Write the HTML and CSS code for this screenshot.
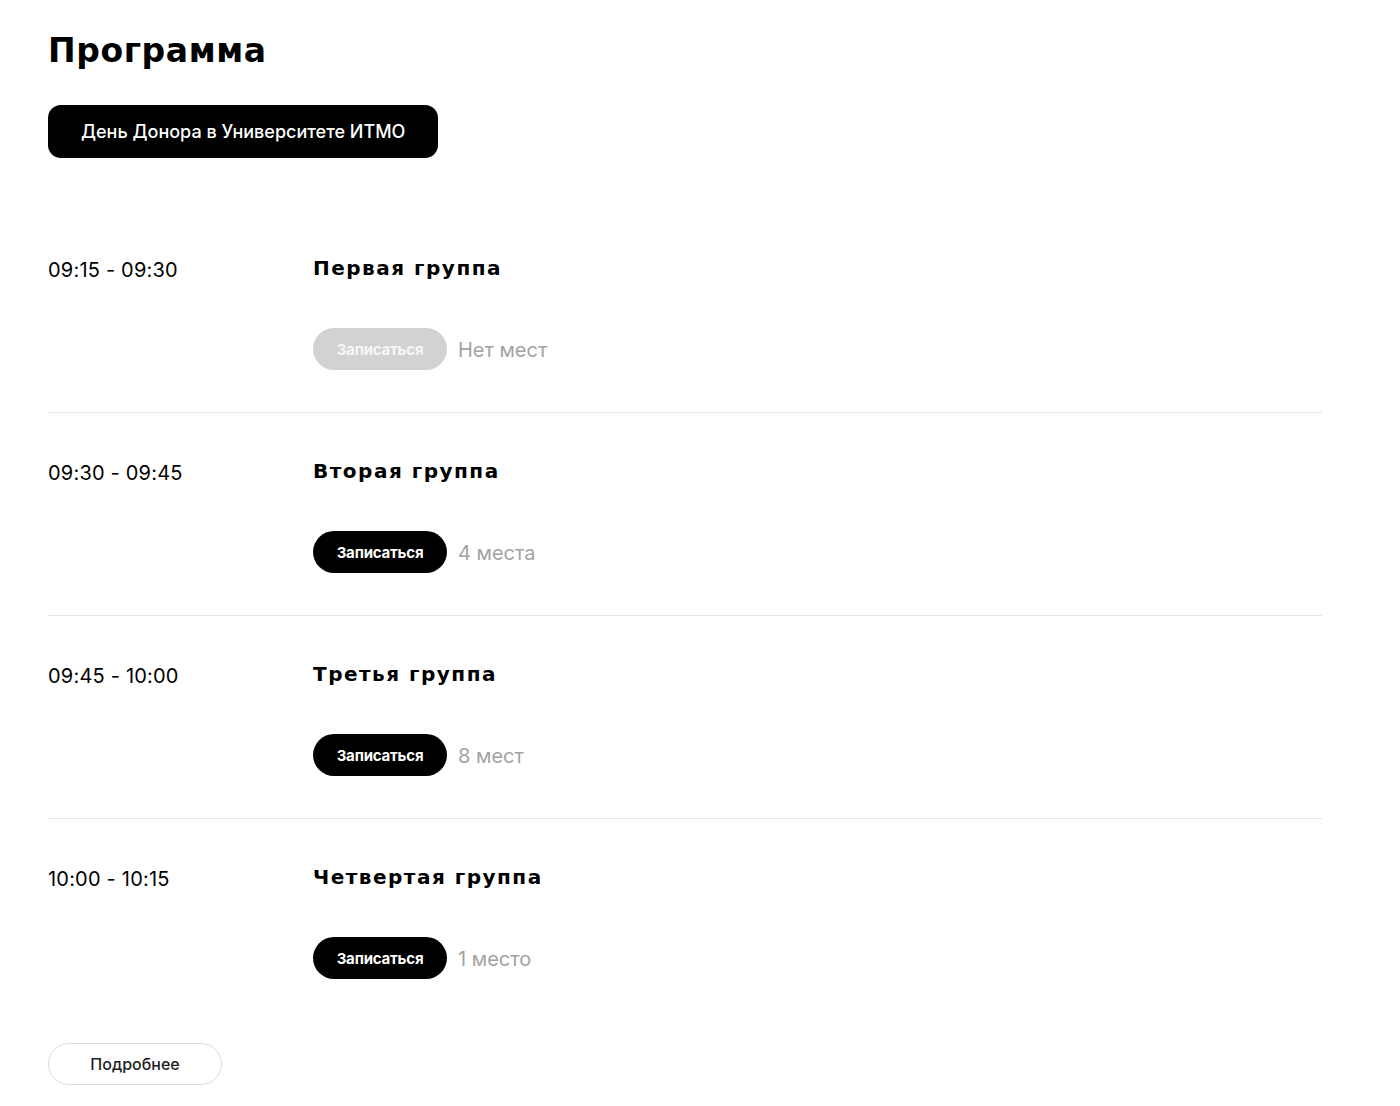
FILE: index.html
```html
<!DOCTYPE html>
<html lang="ru">
<head>
<meta charset="utf-8">
<title>Программа</title>
<link rel="stylesheet" href="styles.css">
</head>
<body>
<main class="program">
  <h1 class="program-title">Программа</h1>
  <div class="tabs">
    <button class="tab tab-active">День Донора в Университете ИТМО</button>
  </div>
  <ul class="schedule">
    <li class="slot">
      <div class="slot-time">09:15 - 09:30</div>
      <div class="slot-body">
        <div class="slot-name">Первая группа</div>
        <div class="slot-actions">
          <button class="signup signup-disabled">Записаться</button>
          <span class="seats">Нет мест</span>
        </div>
      </div>
    </li>
    <li class="slot">
      <div class="slot-time">09:30 - 09:45</div>
      <div class="slot-body">
        <div class="slot-name">Вторая группа</div>
        <div class="slot-actions">
          <button class="signup">Записаться</button>
          <span class="seats">4 места</span>
        </div>
      </div>
    </li>
    <li class="slot">
      <div class="slot-time">09:45 - 10:00</div>
      <div class="slot-body">
        <div class="slot-name">Третья группа</div>
        <div class="slot-actions">
          <button class="signup">Записаться</button>
          <span class="seats">8 мест</span>
        </div>
      </div>
    </li>
    <li class="slot">
      <div class="slot-time">10:00 - 10:15</div>
      <div class="slot-body">
        <div class="slot-name">Четвертая группа</div>
        <div class="slot-actions">
          <button class="signup">Записаться</button>
          <span class="seats">1 место</span>
        </div>
      </div>
    </li>
  </ul>
  <div class="footer">
    <button class="more">Подробнее</button>
  </div>
</main>
</body>
</html>
```

FILE: styles.css
```css
* { box-sizing: border-box; }
html, body { margin: 0; padding: 0; background: #fff; }
body {
  font-family: Inter, "Liberation Sans", Arial, sans-serif;
  color: #000;
}
.program {
  width: 1322px;
  padding: 31px 0 0 48px;
}
.program-title {
  margin: 0;
  font-family: "DejaVu Sans", sans-serif;
  font-weight: 700;
  font-size: 33px;
  line-height: 40px;
  letter-spacing: 0.6px;
}
.tabs {
  margin-top: 34px;
  display: flex;
}
.tab {
  height: 53px;
  padding: 0 33px;
  border: none;
  border-radius: 13px;
  font-family: Inter, "Liberation Sans", sans-serif;
  font-size: 18px;
  font-weight: 500;
  cursor: pointer;
}
.tab-active { background: #000; color: #fff; }
.schedule {
  list-style: none;
  margin: 52px 0 0;
  padding: 0;
}
.slot {
  display: flex;
  padding: 48px 0 42px;
  border-bottom: 1px solid #e6e6e6;
}
.slot:last-child { border-bottom: none; }
.slot-time {
  width: 265px;
  flex: none;
  font-size: 20px;
  line-height: 24px;
  letter-spacing: 0.2px;
}
.slot-name {
  font-family: "DejaVu Sans", sans-serif;
  font-weight: 700;
  font-size: 20px;
  line-height: 20px;
  letter-spacing: 1.5px;
}
.slot-actions {
  margin-top: 50px;
  display: flex;
  align-items: center;
  gap: 11px;
}
.signup {
  width: 134px;
  height: 42px;
  border: none;
  border-radius: 21px;
  background: #000;
  color: #fff;
  font-family: Inter, "Liberation Sans", sans-serif;
  font-size: 15px;
  font-weight: 700;
  letter-spacing: -0.2px;
  cursor: pointer;
}
.signup-disabled { background: #d2d2d2; color: #f7f7f7; }
.seats {
  font-size: 20px;
  color: #a3a3a3;
  padding-top: 2px;
}
.footer {
  margin-top: 22px;
  display: flex;
}
.more {
  width: 174px;
  height: 42px;
  border: 1px solid #dcdcdc;
  border-radius: 21px;
  background: #fff;
  color: #1e1e1e;
  font-family: Inter, "Liberation Sans", sans-serif;
  font-size: 16px;
  font-weight: 500;
  cursor: pointer;
}
```
